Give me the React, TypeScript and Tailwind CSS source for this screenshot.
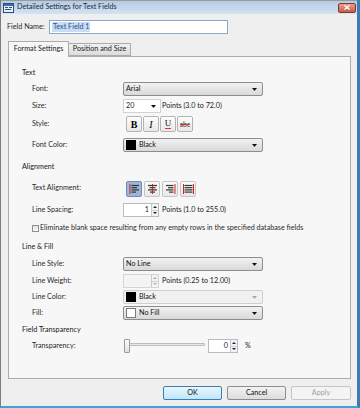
import React from "react";

const Arrow = ({ disabled }: { disabled?: boolean }) => (
  <svg width="5" height="3" viewBox="0 0 5 3" className="shrink-0">
    <path d="M0 0h5L2.5 3z" fill={disabled ? "#a8a8a8" : "#111"} />
  </svg>
);

interface DropProps {
  text: string;
  swatch?: "black" | "white";
  disabled?: boolean;
}

function Dropdown({ text, swatch, disabled }: DropProps) {
  return (
    <div
      className={`w-[140px] h-[14px] flex items-center pl-[2px] pr-[5px] rounded-[2px] border ${
        disabled
          ? "border-[#cfcfcf] bg-[#f1f1f1]"
          : "border-[#8d8d8d] bg-gradient-to-b from-[#f2f2f2] to-[#d9d9d9]"
      }`}
    >
      {swatch && (
        <span
          className={`w-[10px] h-[10px] mr-[3px] ${
            swatch === "black" ? "bg-black" : "bg-white border border-[#7a7a7a]"
          }`}
        />
      )}
      <span className="flex-1 text-[#111]">{text}</span>
      <Arrow disabled={disabled} />
    </div>
  );
}

function SpinBtns({ disabled }: { disabled?: boolean }) {
  const c = disabled ? "#b0b0b0" : "#222";
  return (
    <div className="w-[7px] h-full flex flex-col border-l border-[#c9c9c9]">
      <div className="flex-1 flex items-center justify-center border-b border-[#d0d0d0] bg-[#f3f3f3]">
        <svg width="4" height="2" viewBox="0 0 4 2">
          <path d="M0 2h4L2 0z" fill={c} />
        </svg>
      </div>
      <div className="flex-1 flex items-center justify-center bg-[#f3f3f3]">
        <svg width="4" height="2" viewBox="0 0 4 2">
          <path d="M0 0h4L2 2z" fill={c} />
        </svg>
      </div>
    </div>
  );
}

function Spin({ value, width, disabled }: { value: string; width: string; disabled?: boolean }) {
  return (
    <div
      className={`${width} h-[14px] flex items-stretch border ${
        disabled ? "border-[#d5d5d5] bg-[#f4f4f4]" : "border-[#b8bcc4] bg-white"
      }`}
    >
      <span className="flex-1 flex items-center justify-end pr-[2px]">{value}</span>
      <SpinBtns disabled={disabled} />
    </div>
  );
}

function AlignIcon({ kind }: { kind: "left" | "center" | "right" | "justify" }) {
  const lines: [number, number][] =
    kind === "left"
      ? [[2.5, 10], [2.5, 8], [2.5, 10], [2.5, 7]]
      : kind === "center"
      ? [[1, 10], [2.5, 8.5], [1, 10], [3, 8]]
      : kind === "right"
      ? [[1, 8.5], [3, 8.5], [1, 8.5], [4, 8.5]]
      : [[1.5, 9.5], [1.5, 9.5], [1.5, 9.5], [1.5, 9.5]];
  return (
    <svg width="11" height="10" viewBox="0 0 11 10">
      {lines.map(([a, b], i) => (
        <line key={i} x1={a} x2={b} y1={1.5 + i * 2.2} y2={1.5 + i * 2.2} stroke="#333" strokeWidth="1.2" />
      ))}
      {kind === "left" && <line x1="1" x2="1" y1="0" y2="10" stroke="#d42020" strokeWidth="1" />}
      {kind === "center" && <line x1="5.5" x2="5.5" y1="0" y2="10" stroke="#d42020" strokeWidth="1" />}
      {kind === "right" && <line x1="10" x2="10" y1="0" y2="10" stroke="#d42020" strokeWidth="1" />}
      {kind === "justify" && (
        <>
          <line x1="0.5" x2="0.5" y1="0" y2="10" stroke="#d42020" strokeWidth="1" />
          <line x1="10.5" x2="10.5" y1="0" y2="10" stroke="#d42020" strokeWidth="1" />
        </>
      )}
    </svg>
  );
}

const Label = ({ children }: { children: React.ReactNode }) => (
  <span className="w-[114px] pl-[23px] shrink-0 text-[#2a2a2a]">{children}</span>
);

const Header = ({ children, mt }: { children: React.ReactNode; mt: string }) => (
  <div className={`${mt} h-[12px] flex items-center pl-[13px] text-[#1a1a1a]`}>{children}</div>
);

const styleBtn =
  "w-[16px] h-[16px] flex items-center justify-center border border-[#b4b4b4] rounded-[2px] bg-gradient-to-b from-[#fdfdfd] to-[#e8e8e8]";

export default function App() {
  return (
    <div className="w-[360px] h-[408px] flex flex-col bg-[#efefef] border-l border-l-[#7c7c7c] border-r-[3px] border-r-[#3b7db3] border-b-[2px] border-b-[#3ea3d9] font-['Lato','Liberation_Sans',sans-serif] text-[7.2px] text-[#222] overflow-hidden">
      {/* title bar */}
      <div className="h-[14px] shrink-0 flex items-center border-t border-t-[#9a9a9a] bg-gradient-to-b from-[#b4cbe4] to-[#d3e3f3]">
        <svg width="11" height="10" viewBox="0 0 11 10" className="ml-[2px]">
          <rect x="0.5" y="0.5" width="10" height="9" fill="#e8eef6" stroke="#2d4f7c" />
          <rect x="1" y="1" width="9" height="2" fill="#3c6ba6" />
          <rect x="2" y="4" width="3" height="1" fill="#2d4f7c" />
          <rect x="2" y="6" width="6" height="1" fill="#2d4f7c" />
          <rect x="6" y="4" width="3" height="1" fill="#2d4f7c" />
        </svg>
        <span className="ml-[3px] text-[#1b2a3c]">Detailed Settings for Text Fields</span>
        <div className="ml-auto mr-[1px] w-[18px] h-[10px] rounded-[2px] border border-[#7d3a30] bg-gradient-to-b from-[#e9a090] to-[#c75a45] flex items-center justify-center">
          <svg width="6" height="5" viewBox="0 0 6 5">
            <path d="M0.5 0.5L5.5 4.5M5.5 0.5L0.5 4.5" stroke="white" strokeWidth="1.3" />
          </svg>
        </div>
      </div>

      {/* field name */}
      <div className="mt-[6px] h-[14px] flex items-center pl-[6px]">
        <span className="w-[42px] text-[#2a2a2a]">Field Name:</span>
        <div className="w-[179px] h-[14px] flex items-center pl-[2px] bg-white border border-[#86a9d0]">
          <span className="bg-[#c8ddf3] text-[#2a4f8a] px-[1px] leading-[10px]">Text Field 1</span>
        </div>
      </div>

      {/* tabs */}
      <div className="mt-[6px] h-[16px] flex items-end pl-[7px]">
        <div className="relative z-10 w-[61px] h-[16px] mb-[-1px] flex items-center justify-center bg-[#f7f7f7] border border-b-0 border-[#acacac]">
          Format Settings
        </div>
        <div className="w-[62px] h-[13px] flex items-center justify-center border border-l-0 border-[#acacac] bg-gradient-to-b from-[#f0f0f0] to-[#dcdcdc]">
          Position and Size
        </div>
      </div>

      {/* panel */}
      <div className="ml-[7px] w-[343px] h-[323px] border border-[#acacac] bg-[#f7f7f7] flex flex-col">
        <Header mt="mt-[10px]">Text</Header>
        <div className="mt-[3px] h-[14px] flex items-center">
          <Label>Font:</Label>
          <Dropdown text="Arial" />
        </div>
        <div className="mt-[3px] h-[14px] flex items-center">
          <Label>Size:</Label>
          <div className="w-[38px] h-[14px] flex items-center pl-[2px] pr-[4px] bg-white border border-[#d2d2d2]">
            <span className="flex-1">20</span>
            <Arrow />
          </div>
          <span className="ml-[1px]">Points (3.0 to 72.0)</span>
        </div>
        <div className="mt-[3px] h-[16px] flex items-center">
          <Label>Style:</Label>
          <div className="flex gap-[1px] pl-[3px]">
            <div className={styleBtn}>
              <span className="font-['Liberation_Serif',serif] font-bold text-[10px] text-black">B</span>
            </div>
            <div className={styleBtn}>
              <span className="font-['Liberation_Serif',serif] italic text-[10px] text-black">I</span>
            </div>
            <div className={styleBtn}>
              <span className="font-['Liberation_Serif',serif] text-[9px] text-[#222] border-b border-[#d83030] leading-[9px]">U</span>
            </div>
            <div className={styleBtn}>
              <span className="relative text-[7px] text-[#333]">
                abc
                <span className="absolute left-0 right-0 top-1/2 h-px bg-[#d83030]" />
              </span>
            </div>
          </div>
        </div>
        <div className="mt-[6px] h-[14px] flex items-center">
          <Label>Font Color:</Label>
          <Dropdown text="Black" swatch="black" />
        </div>

        <Header mt="mt-[9px]">Alignment</Header>
        <div className="mt-[7px] h-[17px] flex items-center">
          <Label>Text Alignment:</Label>
          <div className="flex gap-[2px] pl-[3px]">
            {(["left", "center", "right", "justify"] as const).map((k, i) => (
              <div
                key={k}
                className={`w-[16px] h-[16px] flex items-center justify-center rounded-[2px] border ${
                  i === 0
                    ? "border-[#6e8cb5] bg-[#9db6d6]"
                    : "border-[#c4c4c4] bg-gradient-to-b from-[#fafafa] to-[#e9e9e9]"
                }`}
              >
                <AlignIcon kind={k} />
              </div>
            ))}
          </div>
        </div>
        <div className="mt-[6px] h-[14px] flex items-center">
          <Label>Line Spacing:</Label>
          <Spin value="1" width="w-[36px]" />
          <span className="ml-[3px]">Points (1.0 to 255.0)</span>
        </div>
        <div className="mt-[5px] h-[12px] flex items-center pl-[23px]">
          <span className="w-[7px] h-[7px] border border-[#8f8f8f] bg-gradient-to-b from-[#e4e4e4] to-[#fbfbfb]" />
          <span className="ml-[1px] text-[#2a2a2a]">
            Eliminate blank space resulting from any empty rows in the specified database fields
          </span>
        </div>

        <Header mt="mt-[7px]">Line &amp; Fill</Header>
        <div className="mt-[4px] h-[14px] flex items-center">
          <Label>Line Style:</Label>
          <Dropdown text="No Line" />
        </div>
        <div className="mt-[3px] h-[14px] flex items-center">
          <Label>Line Weight:</Label>
          <Spin value="" width="w-[36px]" disabled />
          <span className="ml-[3px]">Points (0.25 to 12.00)</span>
        </div>
        <div className="mt-[2px] h-[14px] flex items-center">
          <Label>Line Color:</Label>
          <Dropdown text="Black" swatch="black" disabled />
        </div>
        <div className="mt-[2px] h-[14px] flex items-center">
          <Label>Fill:</Label>
          <Dropdown text="No Fill" swatch="white" />
        </div>

        <Header mt="mt-[4px]">Field Transparency</Header>
        <div className="mt-[3px] h-[14px] flex items-center">
          <Label>Transparency:</Label>
          <div className="relative w-[82px] h-[14px] flex items-center">
            <div className="absolute left-[4px] right-0 top-[4px] h-[3px] border border-[#bdbdbd] bg-[#e6e6e6] rounded-[1px]" />
            <div className="relative ml-[1px] w-[6px] h-[14px] rounded-[1px] border border-[#9a9a9a] bg-gradient-to-b from-[#fbfbfb] to-[#e0e0e0]" />
          </div>
          <div className="ml-[3px]">
            <Spin value="0" width="w-[30px]" />
          </div>
          <span className="ml-[7px]">%</span>
        </div>
      </div>

      {/* buttons */}
      <div className="mt-[7px] flex justify-end gap-[5px] pr-[6px]">
        <div className="w-[59px] h-[14px] flex items-center justify-center rounded-[2px] border border-[#3c7fb1] bg-gradient-to-b from-[#eaf6fd] to-[#bee6fd] text-[#111]">
          OK
        </div>
        <div className="w-[59px] h-[14px] flex items-center justify-center rounded-[2px] border border-[#8d8d8d] bg-gradient-to-b from-[#f3f3f3] to-[#dcdcdc] text-[#111]">
          Cancel
        </div>
        <div className="w-[60px] h-[14px] flex items-center justify-center rounded-[2px] border border-[#c5c5c5] bg-[#f4f4f4] text-[#a0a0a0]">
          Apply
        </div>
      </div>
    </div>
  );
}
